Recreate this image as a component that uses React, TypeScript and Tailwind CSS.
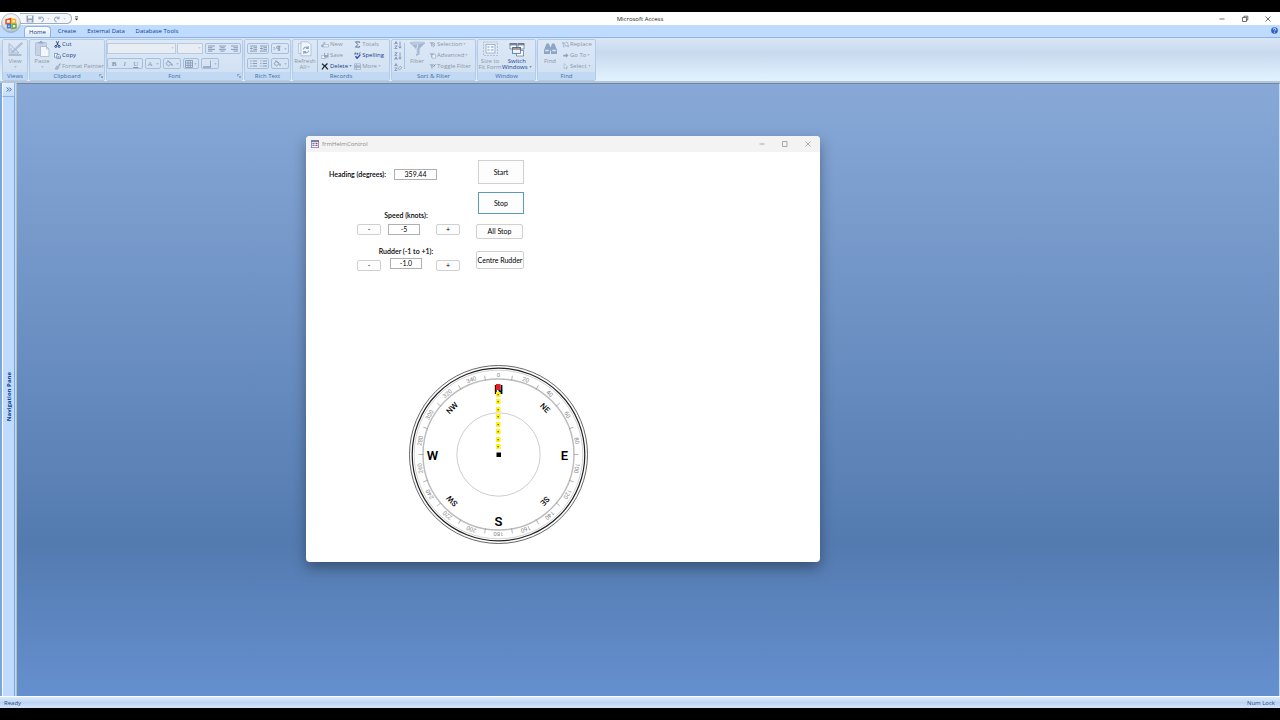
import type { ReactNode } from "react";

const ENABLED = "text-[#15428b]";
const DISABLED = "text-[#8c95a3]";

const FONT_GLYPHS = [
  { key: "bold", label: "B", className: "font-bold" },
  { key: "italic", label: "I", className: "italic" },
  { key: "underline", label: "U", className: "underline" },
];

const DEGREES = Array.from({ length: 36 }, (_, index) => index * 10);

const MAIN_POINTS = [
  { label: "N", x: 90, y: 24 },
  { label: "E", x: 156, y: 90 },
  { label: "S", x: 90, y: 156 },
  { label: "W", x: 24, y: 90 },
];

const MINOR_POINTS = [
  { label: "NE", angle: 45 },
  { label: "SE", angle: 135 },
  { label: "SW", angle: 225 },
  { label: "NW", angle: 315 },
];

const NEEDLE_STEPS = [30, 37, 45, 52, 60, 67, 75, 82];

export default function App() {
  return (
    <div className="flex h-screen flex-col overflow-hidden bg-black py-3 font-['Open_Sans','Noto_Sans',sans-serif] text-[6px] leading-[8px]">
      <TitleBar />
      <Ribbon />
      <div className="flex min-h-0 flex-1">
        <NavigationPane />
        <main className="relative min-w-0 flex-1 border-t border-r border-t-[#6f86a6] border-r-[#c4dcf8] bg-linear-to-b from-[#88a9d8] via-[#547bb0] via-75% to-[#6590cf]">
          <HelmWindow />
        </main>
      </div>
      <footer className="flex h-3 shrink-0 items-center justify-between border-t border-white bg-linear-to-b from-[#dcebfd] via-[#bcd4f3] to-[#d3e5fb] px-1 text-[#2c4a7c]">
        <span>Ready</span>
        <span className="pr-px">Num Lock</span>
      </footer>
    </div>
  );
}

function TitleBar() {
  return (
    <header className="relative z-10 h-[25px] shrink-0 bg-[#bfdbff]">
      <div className="grid h-[13px] grid-cols-3 items-center bg-white">
        <div className="ml-5 flex h-[11px] w-[52px] items-center gap-1 rounded-r-full border border-l-0 border-[#a3adba] bg-[#f4f8fd] pl-[6px] text-[#a4afc0]">
          <button type="button" aria-label="Save">
            <SaveIcon />
          </button>
          <button type="button" aria-label="Undo" className="flex items-center gap-[3px]">
            <UndoIcon />
            <DropArrow />
          </button>
          <button type="button" aria-label="Redo" className="flex items-center gap-[3px]">
            <span className="-scale-x-100">
              <UndoIcon />
            </span>
            <DropArrow />
          </button>
          <button type="button" aria-label="Customize toolbar" className="ml-1 text-[#333]">
            <svg className="size-[5px]" viewBox="0 0 5 5" fill="currentColor">
              <path d="M1 0.500h3v0.800H1zM0.800 2.500h3.400L2.500 4.500z" />
            </svg>
          </button>
        </div>
        <h1 className="text-center text-[#222]">Microsoft Access</h1>
        <div className="flex justify-end gap-[15px] pr-2 text-[#333]">
          <WindowButton label="Minimize" path="M1.500 4h5" />
          <WindowButton label="Restore" path="M1.500 2.500h4v4h-4zM3 2.500V1.200h3.800v3.800h-1.300" />
          <WindowButton label="Close" path="M1.500 1.500l5 5M6.500 1.500l-5 5" />
        </div>
      </div>
      <nav className="flex h-3 items-end gap-[5px] pl-[24px] text-[#15428b]">
        <button
          type="button"
          className="h-[11px] w-[27px] rounded-t-sm border border-b-0 border-[#8db2e3] bg-linear-to-b from-white to-[#dde9f7]"
        >
          Home
        </button>
        <button type="button" className="h-3 w-[22px]">Create</button>
        <button type="button" className="h-3 w-[46px]">External Data</button>
        <button type="button" className="h-3 w-[46px]">Database Tools</button>
        <button type="button" aria-label="Help" className="mr-[2px] mb-[3px] ml-auto">
          <svg className="size-[7px]" viewBox="0 0 7 7">
            <circle cx="3.500" cy="3.500" r="3.300" fill="#2d62c0" />
            <path d="M2.300 2.600q0-1.200 1.200-1.200t1.200 1-1.200 1.400M3.500 4.800v.8" fill="none" stroke="#fff" strokeWidth="0.900" />
          </svg>
        </button>
      </nav>
      <button type="button" aria-label="Office Button" className="absolute top-px left-[1px]">
        <OfficeLogo />
      </button>
    </header>
  );
}

function Ribbon() {
  return (
    <div className="flex h-[46px] shrink-0 flex-col border-t border-b-2 border-t-[#8db2e3] border-b-[#b4c5d8] bg-linear-to-b from-[#dae6f4] via-[#c8d9ee] via-35% to-[#e2f3fe]">
      <div className="flex min-h-0 flex-1 gap-px pt-px pr-1 pl-[2px]">
        <Group title="Views" width="w-[26px]">
          <BigButton label="View" arrow icon={<ViewIcon />} />
        </Group>
        <Group title="Clipboard" width="w-[76px]" launcher>
          <BigButton label="Paste" arrow icon={<PasteIcon />} />
          <ButtonColumn>
            <SmallButton label="Cut" enabled icon={<CutIcon />} />
            <SmallButton label="Copy" enabled icon={<CopyIcon />} />
            <SmallButton label="Format Painter" icon={<BrushIcon />} />
          </ButtonColumn>
        </Group>
        <Group title="Font" width="w-[137px]" launcher>
          <FontControls />
        </Group>
        <Group title="Rich Text" width="w-[47px]">
          <div className="flex flex-col gap-1 pt-[3px] pl-[2px]">
            <div className="flex gap-[2px]">
              <IconBox width="w-[22px]">
                <LinesIcon kind="outdent" />
                <LinesIcon kind="indent" />
              </IconBox>
              <IconBox width="w-[18px]">
                <ParagraphIcon />
                <DropArrow />
              </IconBox>
            </div>
            <div className="flex gap-[2px]">
              <IconBox width="w-[22px]">
                <LinesIcon kind="numbers" />
                <LinesIcon kind="bullets" />
              </IconBox>
              <IconBox width="w-[18px]">
                <HighlightIcon />
                <DropArrow />
              </IconBox>
            </div>
          </div>
        </Group>
        <Group title="Records" width="w-[98px]">
          <BigButton label="Refresh" secondLine="All" arrow icon={<RefreshIcon />} />
          <ButtonColumn divider>
            <SmallButton label="New" icon={<NewIcon />} />
            <SmallButton label="Save" icon={<SaveRecordIcon />} />
            <SmallButton label="Delete" enabled arrow icon={<DeleteIcon />} />
          </ButtonColumn>
          <div className="ml-[2px]">
            <ButtonColumn>
              <SmallButton label="Totals" icon={<SigmaIcon />} />
              <SmallButton label="Spelling" enabled icon={<SpellingIcon />} />
              <SmallButton label="More" arrow icon={<MoreIcon />} />
            </ButtonColumn>
          </div>
        </Group>
        <Group title="Sort & Filter" width="w-[85px]">
          <div className="flex flex-col gap-[3px] pt-px pl-[2px]">
            <SortIcon first="A" second="Z" />
            <SortIcon first="Z" second="A" />
            <ClearSortIcon />
          </div>
          <div className="my-[3px] ml-[2px] border-l border-[#a9c3e2]" />
          <BigButton label="Filter" icon={<FunnelIcon />} />
          <ButtonColumn>
            <SmallButton label="Selection" arrow icon={<FilterMarkIcon kind="bolt" />} />
            <SmallButton label="Advanced" arrow icon={<FilterMarkIcon kind="sheet" />} />
            <SmallButton label="Toggle Filter" icon={<FilterMarkIcon kind="plain" />} />
          </ButtonColumn>
        </Group>
        <Group title="Window" width="w-[59px]">
          <BigButton label="Size to" secondLine="Fit Form" icon={<SizeFormIcon />} />
          <BigButton label="Switch" secondLine="Windows" enabled arrow icon={<SwitchIcon />} />
        </Group>
        <Group title="Find" width="w-[59px]">
          <BigButton label="Find" icon={<BinocularsIcon />} />
          <ButtonColumn>
            <SmallButton label="Replace" icon={<ReplaceIcon />} />
            <SmallButton label="Go To" arrow icon={<GoToIcon />} />
            <SmallButton label="Select" arrow icon={<PointerIcon />} />
          </ButtonColumn>
        </Group>
      </div>
    </div>
  );
}

type GroupProps = {
  title: string;
  width: string;
  launcher?: boolean;
  children: ReactNode;
};

function Group({ title, width, launcher, children }: GroupProps) {
  return (
    <section
      className={`flex shrink-0 flex-col rounded-[2px] border border-[#b3cbe8] bg-linear-to-b from-[#dce8f6] to-[#d0e0f2] ${width}`}
    >
      <div className="flex min-h-0 flex-1 whitespace-nowrap">{children}</div>
      <div className="relative h-2 shrink-0 bg-[#c1d9f2] text-center whitespace-nowrap text-[#3e6aaa]">
        {title}
        {launcher && (
          <button type="button" aria-label={`${title} options`} className="absolute right-px bottom-[2px]">
            <svg className="size-1" viewBox="0 0 4 4" fill="none" stroke="#6f8fb8" strokeWidth="0.700">
              <path d="M0.500 2.500v-2h2M1.800 1.800l1.700 1.700M3.600 2v1.600H2" />
            </svg>
          </button>
        )}
      </div>
    </section>
  );
}

function ButtonColumn({ divider, children }: { divider?: boolean; children: ReactNode }) {
  return (
    <div
      className={`flex shrink-0 flex-col items-start gap-[3px] ${
        divider ? "border-l border-[#a9c3e2] pl-[3px]" : ""
      }`}
    >
      {children}
    </div>
  );
}

type RibbonButtonProps = {
  label: string;
  secondLine?: string;
  enabled?: boolean;
  arrow?: boolean;
  icon: ReactNode;
};

function BigButton({ label, secondLine, enabled, arrow, icon }: RibbonButtonProps) {
  return (
    <button
      type="button"
      disabled={!enabled}
      className={`flex min-w-6 shrink-0 flex-col items-center pt-px leading-[6px] ${enabled ? ENABLED : DISABLED}`}
    >
      {icon}
      <span className="mt-px">{label}</span>
      <span className="flex min-h-[6px] items-center gap-px">
        {secondLine}
        {arrow && <DropArrow />}
      </span>
    </button>
  );
}

function SmallButton({ label, enabled, arrow, icon }: RibbonButtonProps) {
  return (
    <button
      type="button"
      disabled={!enabled}
      className={`flex h-2 items-center gap-px ${enabled ? ENABLED : DISABLED}`}
    >
      {icon}
      <span>{label}</span>
      {arrow && <DropArrow />}
    </button>
  );
}

function IconBox({ width, children }: { width: string; children: ReactNode }) {
  return (
    <div
      className={`flex h-[11px] shrink-0 items-center justify-around rounded-[2px] border border-[#a5bfe0] text-[#8093b0] ${width}`}
    >
      {children}
    </div>
  );
}

function FontControls() {
  return (
    <div className="flex flex-col gap-1 pt-[3px]">
      <div className="flex gap-px">
        <FontSelect label="Font" width="w-[69px]" />
        <FontSelect label="Font size" width="w-[26px]" />
        <div className="ml-px">
          <IconBox width="w-[36px]">
            <LinesIcon kind="left" />
            <LinesIcon kind="center" />
            <LinesIcon kind="right" />
          </IconBox>
        </div>
      </div>
      <div className="flex gap-[2px]">
        <IconBox width="w-[36px]">
          {FONT_GLYPHS.map((glyph) => (
            <button key={glyph.key} type="button" disabled className={`font-['Liberation_Serif',serif] text-[7px] ${glyph.className}`}>
              {glyph.label}
            </button>
          ))}
        </IconBox>
        <IconBox width="w-4">
          <span className="font-['Liberation_Serif',serif] text-[7px]">A</span>
          <DropArrow />
        </IconBox>
        <IconBox width="w-[18px]">
          <HighlightIcon />
          <DropArrow />
        </IconBox>
        <IconBox width="w-4">
          <svg className="size-2" viewBox="0 0 8 8" fill="none" stroke="currentColor" strokeWidth="0.800">
            <path d="M0.500 0.500h7v7h-7zM0.500 3h7M0.500 5.300h7M3 .5v7M5.300.5v7" />
          </svg>
          <DropArrow />
        </IconBox>
        <IconBox width="w-[18px]">
          <svg className="size-2" viewBox="0 0 8 8" fill="none" stroke="currentColor" strokeWidth="0.700">
            <path d="M7.500 0.500v6.500" />
            <path d="M0 7h8" strokeWidth="1.300" />
          </svg>
          <DropArrow />
        </IconBox>
      </div>
    </div>
  );
}

function FontSelect({ label, width }: { label: string; width: string }) {
  return (
    <div className={`relative h-[11px] ${width}`}>
      <select
        aria-label={label}
        disabled
        className="block size-full appearance-none border border-[#b9cbe0] bg-[#e8edf3]"
      />
      <span className="absolute top-1 right-[2px] text-[#a4afc0]">
        <DropArrow />
      </span>
    </div>
  );
}

function NavigationPane() {
  return (
    <aside className="flex w-[17px] shrink-0 flex-col border-r border-l-2 border-r-[#b9bfae] border-l-[#7ea6d8] bg-[#bfdbff] pr-px">
      <button
        type="button"
        aria-label="Open navigation pane"
        className="flex h-[14px] shrink-0 items-center justify-center border-x border-b border-[#8db2e3] border-l-white bg-linear-to-b from-[#e3effe] to-[#c4dcfa] text-[#15428b]"
      >
        <svg className="h-[5px] w-[6px]" viewBox="0 0 6 5" fill="none" stroke="currentColor" strokeWidth="0.800">
          <path d="M0.700 0.500l2 2-2 2M3.200 0.500l2 2-2 2" />
        </svg>
      </button>
      <div className="flex flex-1 items-center justify-center border-x border-r-[#7ea6d8] border-l-white">
        <span className="rotate-180 font-bold text-[#15428b] [writing-mode:vertical-rl]">Navigation Pane</span>
      </div>
    </aside>
  );
}

function HelmWindow() {
  return (
    <section className="absolute top-[52px] left-[289px] flex h-[426px] w-[514px] flex-col overflow-hidden rounded-[4px] bg-white shadow-[0_6px_14px_rgba(0,0,0,0.35)]">
      <header className="flex h-4 shrink-0 items-center bg-[#f3f3f3] pr-2 pl-[5px] text-[#8a8a8a]">
        <svg className="size-2" viewBox="0 0 8 8">
          <path d="M0 0h8v8H0z" fill="#7d7aa8" />
          <path d="M0.800 2h6.400v5.200H.8z" fill="#f5f5fb" />
          <path d="M1.500 3.400h2M1.500 5.400h2" stroke="#5477c4" strokeWidth="1.200" />
          <path d="M4.500 3.400h2M4.500 5.400h2" stroke="#b0485d" strokeWidth="1.200" />
        </svg>
        <h2 className="ml-[3px]">frmHelmControl</h2>
        <div className="ml-auto flex gap-[15px]">
          <WindowButton label="Minimize form" path="M1.500 4h5" />
          <WindowButton label="Maximize form" path="M1.500 1.500h4.500v5h-4.500z" />
          <WindowButton label="Close form" path="M1.500 1.500l5 5M6.500 1.500l-5 5" />
        </div>
      </header>
      <form className="flex flex-1 flex-col pt-2 pb-[18px] pl-[23px] font-['Lato',sans-serif] text-[7px] text-black">
        <div className="flex gap-4">
          <div className="flex w-[131px] flex-col">
            <div className="mt-[9px] flex items-center justify-between pr-[23px]">
              <label htmlFor="heading" className="pb-px font-semibold">Heading (degrees):</label>
              <ValueField id="heading" value="359.44" width="w-[43px]" />
            </div>
            <Stepper id="speed" label="Speed (knots):" value="-5" spacing="mt-[31px]" rowClass="mt-[5px]" fieldClass="ml-[7px]" />
            <Stepper id="rudder" label="Rudder (-1 to +1):" value="-1.0" spacing="mt-3" rowClass="mt-[3px]" fieldClass="mb-1 ml-[9px]" />
          </div>
          <div className="flex flex-col">
            <FormButton className="ml-[2px] h-6 w-[46px] border-[#d0d0d0]">Start</FormButton>
            <FormButton className="mt-2 ml-[2px] h-[22px] w-[46px] border-[#5c9bb5]">Stop</FormButton>
            <FormButton className="mt-[10px] h-[15px] w-[47px] rounded-[2px] border-[#d0d0d0]">All Stop</FormButton>
            <FormButton className="mt-3 h-[18px] w-12 rounded-[2px] border-[#d0d0d0]">Centre Rudder</FormButton>
          </div>
        </div>
        <div className="mt-auto ml-[79px]">
          <Compass />
        </div>
      </form>
    </section>
  );
}

function ValueField({ id, value, width }: { id: string; value: string; width: string }) {
  return (
    <input
      id={id}
      defaultValue={value}
      className={`block h-[11px] border border-[#b0b0b0] bg-white p-0 pb-px text-center leading-[8px] ${width}`}
    />
  );
}

type StepperProps = {
  id: string;
  label: string;
  value: string;
  spacing: string;
  rowClass: string;
  fieldClass: string;
};

function Stepper({ id, label, value, spacing, rowClass, fieldClass }: StepperProps) {
  return (
    <div className={`ml-7 flex flex-col ${spacing}`}>
      <label htmlFor={id} className="self-center pr-[5px] font-semibold">{label}</label>
      <div className={`flex items-center ${rowClass}`}>
        <FormButton className="h-[11px] w-6 rounded-[2px] border-[#d0d0d0]">-</FormButton>
        <div className={fieldClass}>
          <ValueField id={id} value={value} width="w-8" />
        </div>
        <div className="ml-auto">
          <FormButton className="h-[11px] w-6 rounded-[2px] border-[#d0d0d0]">+</FormButton>
        </div>
      </div>
    </div>
  );
}

function FormButton({ className, children }: { className: string; children: ReactNode }) {
  return (
    <button
      type="button"
      className={`flex items-center justify-center border bg-[#fdfdfd] pb-px whitespace-nowrap ${className}`}
    >
      {children}
    </button>
  );
}

function Compass() {
  return (
    <svg className="block size-[180px]" viewBox="-0.500 -0.500 180 180" role="img" aria-label="Compass heading">
      <g fill="none">
        <circle cx="90" cy="90" r="89" stroke="#555" strokeWidth="0.900" />
        <circle cx="90" cy="90" r="86.300" stroke="#222" strokeWidth="1.200" />
        <circle cx="90" cy="90" r="84.300" stroke="#b5b5b5" strokeWidth="0.600" />
        <circle cx="90" cy="90" r="75.500" stroke="#bbb" strokeWidth="1.400" />
        <circle cx="90" cy="90" r="41.700" stroke="#b8b8b8" strokeWidth="0.700" />
      </g>
      {DEGREES.map((degree) =>
        degree % 20 === 0 ? (
          <text
            key={degree}
            x="90"
            y="12.500"
            className="font-['Roboto',sans-serif] text-[6px]"
            fill="#888"
            textAnchor="middle"
            transform={`rotate(${degree} 90 90)`}
          >
            {degree}
          </text>
        ) : (
          <path
            key={degree}
            d="M90 10V15"
            stroke="#999"
            strokeWidth="0.700"
            transform={`rotate(${degree} 90 90)`}
          />
        ),
      )}
      {MAIN_POINTS.map((point) => (
        <text
          key={point.label}
          x={point.x}
          y={point.y + 5}
          className="font-['Roboto',sans-serif] text-[13px] font-semibold"
          textAnchor="middle"
        >
          {point.label}
        </text>
      ))}
      {MINOR_POINTS.map((point) => (
        <text
          key={point.label}
          x="90"
          y="27"
          className="font-['Roboto',sans-serif] text-[8px] font-medium"
          textAnchor="middle"
          transform={`rotate(${point.angle} 90 90)`}
        >
          {point.label}
        </text>
      ))}
      <rect x="87.500" y="19.500" width="4.500" height="6" fill="#e0202c" />
      {NEEDLE_STEPS.map((y) => (
        <g key={y}>
          <rect x="87.500" y={y - 2.5} width="4.500" height="5" fill="#fff21c" />
          <rect x="89" y={y - 0.5} width="1.300" height="1.300" fill="#5b5600" />
        </g>
      ))}
      <rect x="88" y="88" width="4.500" height="4.500" />
    </svg>
  );
}

function WindowButton({ label, path }: { label: string; path: string }) {
  return (
    <button type="button" aria-label={label}>
      <svg className="size-2" viewBox="0 0 8 8" fill="none" stroke="currentColor" strokeWidth="0.700">
        <path d={path} />
      </svg>
    </button>
  );
}

function DropArrow() {
  return (
    <svg aria-hidden="true" className="h-[2px] w-[3px] shrink-0 opacity-70" viewBox="0 0 3 2" fill="currentColor">
      <path d="M0.300 0.200h2.400L1.500 1.700z" />
    </svg>
  );
}

function OfficeLogo() {
  return (
    <svg className="size-5" viewBox="0 0 20 20">
      <defs>
        <radialGradient id="orb" cx="50%" cy="30%" r="75%">
          <stop offset="0" stopColor="#fff" />
          <stop offset="0.600" stopColor="#e3e6ec" />
          <stop offset="1" stopColor="#98a8c0" />
        </radialGradient>
      </defs>
      <circle cx="10" cy="10" r="9.500" fill="url(#orb)" stroke="#8b9bb4" strokeWidth="0.600" />
      <g fill="none" strokeWidth="1.500">
        <path d="M5 7l4.500-1.500v4.700l-4.500 .4z" stroke="#e2571e" />
        <path d="M10.800 6l3.700.6v3.400h-3.700z" stroke="#f5b324" />
        <path d="M6.500 11.800h2.800v2.900h-2.800z" stroke="#3c7bd4" />
        <path d="M11 11.300h4v3.500L11 15.500z" stroke="#6aa83c" />
      </g>
    </svg>
  );
}

function SaveIcon() {
  return (
    <svg className="size-2" viewBox="0 0 8 8">
      <path d="M0.500 0.500h7v7h-6l-1-1z" fill="#8f9fbb" />
      <path d="M2 .8h4v2.700H2z" fill="#f2f6fb" />
      <path d="M2.300 5h3.500v2.500H2.300z" fill="#dbe4f0" />
    </svg>
  );
}

function UndoIcon() {
  return (
    <svg className="h-2 w-[6px]" viewBox="0 0 6 8" fill="none" stroke="#9aaac3" strokeWidth="1.100">
      <path d="M1 1.500v2.300h2.300M1.200 3.600Q3.500.8 5 3t-1.600 4" />
    </svg>
  );
}

function ViewIcon() {
  return (
    <svg className="h-4 w-[17px]" viewBox="0 0 17 16" fill="none" stroke="#a0b3ce" strokeWidth="0.900">
      <path d="M2 2.500l10 9.500H2zM4 7v3h3" fill="#d7e3f2" />
      <path d="M14.500 1.500L6 9.500l-1 2 2-1 8.500-8z" fill="#bccbdf" />
      <path d="M1.500 14h13" strokeWidth="1.600" />
    </svg>
  );
}

function PasteIcon() {
  return (
    <svg className="h-4 w-[15px]" viewBox="0 0 15 16">
      <rect x="0.500" y="1.500" width="11" height="13" rx="1" fill="#c3d2e6" stroke="#a2b5d0" strokeWidth="0.700" />
      <path d="M3.500 2.500V1h1.300a1.200 1.200 0 0 1 2.400 0h1.300v1.500z" fill="#94a9c7" />
      <path d="M5.500 5.500h6l2.500 2.500v7.500H5.500z" fill="#f3f7fc" stroke="#9fb2ce" strokeWidth="0.700" />
      <path d="M11.500 5.500V8H14" fill="none" stroke="#9fb2ce" strokeWidth="0.700" />
    </svg>
  );
}

function CutIcon() {
  return (
    <svg className="size-[7px]" viewBox="0 0 7 7" fill="none" stroke="#24467f" strokeWidth="1">
      <path d="M2.300.3l2 4.200M4.700.3l-2 4.200" />
      <circle cx="1.800" cy="5.400" r="1" />
      <circle cx="5.200" cy="5.400" r="1" />
    </svg>
  );
}

function CopyIcon() {
  return (
    <svg className="size-[7px]" viewBox="0 0 7 7" fill="#fff" stroke="#5578b0" strokeWidth="0.700">
      <path d="M0.400 1.400h3.200v3.800H.4z" />
      <path d="M2.800 2.600h2.400l1.300 1.300v2.700H2.800z" />
      <path d="M3.700 4.300h1.800M3.700 5.400h1.800" />
    </svg>
  );
}

function BrushIcon() {
  return (
    <svg className="size-[7px]" viewBox="0 0 7 7" fill="none" stroke="#8ea0bb">
      <path d="M6.300.5L4.500 3.400" strokeWidth="1.200" />
      <path d="M2.800 2.800l2.400 1.600-1.800 2.100-2.400-.5z" fill="#aab8cb" strokeWidth="0.500" />
    </svg>
  );
}

function LinesIcon({ kind }: { kind: "left" | "center" | "right" | "indent" | "outdent" | "numbers" | "bullets" }) {
  const paths = {
    left: "M0 1h7M0 2.700h4.500M0 4.400h7M0 6.100h4.500",
    center: "M0 1h7M1.300 2.700h4.400M0 4.400h7M1.300 6.100h4.400",
    right: "M0 1h7M2.500 2.700H7M0 4.400h7M2.500 6.100H7",
    indent: "M0 1h7M3.500 2.700H7M3.500 4.400H7M0 6.100h7M0 3.500h2.500M1.500 2.300l1.200 1.200-1.200 1.200",
    outdent: "M0 1h7M3.500 2.700H7M3.500 4.400H7M0 6.100h7M0.300 3.500h2.500M1.500 2.300L.3 3.500l1.200 1.200",
    numbers: "M2.700 1H7M2.700 3.500H7M2.700 6H7M1 0.300v1.500M.5 3.500h1M1 5.300v1.500",
    bullets: "M2.700 1H7M2.700 3.500H7M2.700 6H7M0.300 1h1.200M.3 3.500h1.200M.3 6h1.200",
  };

  return (
    <svg aria-hidden="true" className="size-[7px]" viewBox="0 0 7 7" fill="none" stroke="currentColor" strokeWidth="0.900">
      <path d={paths[kind]} />
    </svg>
  );
}

function ParagraphIcon() {
  return (
    <svg className="h-[7px] w-2" viewBox="0 0 8 7" fill="none" stroke="currentColor" strokeWidth="0.800">
      <path d="M0.500 2l1.500 1.500L.5 5M7.500 1.200H4.700a1.100 1.100 0 0 0 0 2.300h.5M5.300 1.200V6M6.600 1.200V6" />
    </svg>
  );
}

function HighlightIcon() {
  return (
    <svg className="h-[7px] w-2" viewBox="0 0 8 7" fill="none" stroke="currentColor" strokeWidth="0.800">
      <path d="M3.300 1L1 3.700 3.600 6l2.700-2.600zM2.500.5l2.800 2.600" fill="#d5dfec" />
      <path d="M7 3.800v2" strokeWidth="1.200" />
    </svg>
  );
}

function RefreshIcon() {
  return (
    <svg className="h-4 w-[14px]" viewBox="0 0 14 16">
      <path d="M0.500 2.500h7.500v10H.5z" fill="#e9f0f8" stroke="#a6b8d1" strokeWidth="0.700" />
      <path d="M3 0.800h7l3 3v11H3z" fill="#f1f6fc" stroke="#9fb3cf" strokeWidth="0.700" />
      <path d="M5.300 8.500a2.700 2.700 0 0 1 4.800-1.300M10.300 5.300v2.200H8M10.700 9.500a2.700 2.700 0 0 1-4.800 1.300M5.700 12.800v-2.200H8" fill="none" stroke="#8ba4c8" strokeWidth="1.100" />
    </svg>
  );
}

function NewIcon() {
  return (
    <svg className="h-[7px] w-2" viewBox="0 0 8 7">
      <path d="M2.500 3.500h5v2.500h-5z" fill="#e9eff7" stroke="#93a7c4" strokeWidth="0.600" />
      <path d="M0 4.800l1.800-1.300v2.600zM3.300.8v2.400M2.100 2h2.400" fill="#93a7c4" stroke="#93a7c4" strokeWidth="0.700" />
    </svg>
  );
}

function SaveRecordIcon() {
  return (
    <svg className="h-[7px] w-2" viewBox="0 0 8 7">
      <path d="M0.300 3.500h4.500V6.500H.3z" fill="#e9eff7" stroke="#93a7c4" strokeWidth="0.600" />
      <path d="M3 1h4.500v4.500H3z" fill="#93a7c4" />
      <path d="M4 1.200h2.500v1.600H4z" fill="#eef3f9" />
    </svg>
  );
}

function DeleteIcon() {
  return (
    <svg className="h-[7px] w-2" viewBox="0 0 8 7" fill="none" stroke="#1e2636" strokeWidth="1.300">
      <path d="M1 .7q3 2 5.800 5.600M6.500.5Q3.500 2.700 1 6.500" />
    </svg>
  );
}

function SigmaIcon() {
  return (
    <svg className="size-[7px]" viewBox="0 0 7 7" fill="none" stroke="#5e7394" strokeWidth="1">
      <path d="M5.600 1.900V.9H1.500L3.800 3.500 1.500 6.100h4.100v-1" />
    </svg>
  );
}

function SpellingIcon() {
  return (
    <svg className="size-[7px]" viewBox="0 0 7 7" fill="none">
      <path d="M0.500 2.500L1.300.6l.8 1.900M.8 1.900h1M3 .7v1.700h.9a.5.5 0 0 0 0-.9H3M6.500.8a.8.800 0 1 0 0 1.500" stroke="#384a6d" strokeWidth="0.600" />
      <path d="M1.500 4.300l1.600 2L6.200 2.900" stroke="#2a50b5" strokeWidth="1.400" />
    </svg>
  );
}

function MoreIcon() {
  return (
    <svg className="size-[7px]" viewBox="0 0 7 7">
      <path d="M0.400 0.900h6.200v5.400H.4zM.4 2.700h6.200M.4 4.500h6.200M2.500 1v5.300" fill="#eaf0f7" stroke="#8fa4c2" strokeWidth="0.700" />
      <path d="M0.400 2.700h6.200v1.800H.4z" fill="#a3b5cf" />
    </svg>
  );
}

function SortIcon({ first, second }: { first: string; second: string }) {
  return (
    <svg role="img" aria-label={`Sort ${first} to ${second}`} className="size-2" viewBox="0 0 8 8" fill="none" stroke="#7189ad" strokeWidth="0.800">
      <path d={first === "A" ? "M0.500 3.300L2 .5l1.500 2.800M1 2.400h2" : "M0.600.7h2.700L.6 3.300h2.700"} />
      <path d={second === "A" ? "M0.500 7.700L2 4.900l1.500 2.800M1 6.800h2" : "M0.600 5h2.700L.6 7.500h2.700"} />
      <path d="M6 .5v6.500M4.700 5.500L6 7.200l1.300-1.700" />
    </svg>
  );
}

function ClearSortIcon() {
  return (
    <svg className="size-2" viewBox="0 0 8 8" fill="none" stroke="#7189ad" strokeWidth="0.700">
      <path d="M0.500 3.300L2 .5l1.500 2.800M1 2.400h2M.6 5h2.700L.6 7.500h2.700" />
      <path d="M4.200 5.700l2-2.500 1.500 1.200-2 2.500z" fill="#e8eef6" />
    </svg>
  );
}

function FunnelIcon() {
  return (
    <svg className="h-4 w-[17px]" viewBox="0 0 17 16">
      <path d="M1 2h15l-5.500 6v5.500L7 15V8z" fill="#a5b8d2" />
      <path d="M3 3h6L7.700 8v5" fill="none" stroke="#dce6f2" strokeWidth="1" />
      <ellipse cx="8.500" cy="2" rx="7.500" ry="1" fill="#c6d4e7" stroke="#93a8c7" strokeWidth="0.500" />
    </svg>
  );
}

function FilterMarkIcon({ kind }: { kind: "bolt" | "sheet" | "plain" }) {
  return (
    <svg className="size-[7px]" viewBox="0 0 8 7">
      <path d="M0.500.8h5.500L4 3.300v2.900l-1.500-.8V3.300z" fill="#9db0cb" />
      {kind === "bolt" && <path d="M6.800 1.500L5 4h1.500L5 6.700" fill="none" stroke="#8497b5" strokeWidth="0.800" />}
      {kind === "sheet" && <path d="M3.500 2.500h4v4h-4z" fill="#eef3f9" stroke="#8fa4c2" strokeWidth="0.700" />}
      {kind === "plain" && <path d="M4.800 4.200L7.300 1" fill="none" stroke="#7187a8" strokeWidth="1" />}
    </svg>
  );
}

function SizeFormIcon() {
  return (
    <svg className="h-4 w-[15px]" viewBox="0 0 15 16">
      <rect x="0.500" y="1" width="14" height="13.500" fill="#dde7f3" stroke="#a3b6d1" strokeWidth="0.800" strokeDasharray="2 1" />
      <rect x="3" y="3.500" width="9" height="8.500" fill="#f4f8fc" stroke="#92a8c8" strokeWidth="0.800" />
      <path d="M4.500 6h2M8 6h2.500M4.500 9h2M8 9h2.500" stroke="#7b94ba" strokeWidth="1.200" />
    </svg>
  );
}

function SwitchIcon() {
  return (
    <svg className="h-4 w-4" viewBox="0 0 16 16" stroke="#5c6c86" strokeWidth="0.700">
      <path d="M1 2.500h6.500V8H1zM9 2.500h6V8H9z" fill="#fff" />
      <path d="M1 2.500h6.500v1.500H1zM9 2.500h6v1.500H9z" fill="#8c98ab" />
      <path d="M7.500 9.500h7V15h-7z" fill="#fff" />
      <path d="M3.500 6.500h8v6h-8z" fill="#eaf3ff" stroke="#2e5cab" />
      <path d="M3.500 6.500h8v1.700h-8z" fill="#e9a73a" stroke="#2e5cab" />
    </svg>
  );
}

function BinocularsIcon() {
  return (
    <svg className="h-4 w-[15px]" viewBox="0 0 15 16" fill="#8fa5c5">
      <path d="M3.500 2.500h2.500l1 3v7.500H1V9zM9 2.500h2.500L14 9v4H8V5.500z" />
      <path d="M6.500 6h2v3.500h-2z" />
      <path d="M2.200 9.500h3.500M9.300 9.500h3.500" stroke="#dbe5f1" strokeWidth="1.300" />
    </svg>
  );
}

function ReplaceIcon() {
  return (
    <svg className="size-[7px]" viewBox="0 0 8 7" fill="none" stroke="#879cbc" strokeWidth="0.700">
      <path d="M1 .4v2.800h1.300a.8.800 0 0 0 0-1.600H1M4.200 3.500a1 1 0 1 0 1.300 1.800M6.700 4a1 1 0 1 0 0 2M7.500 3.500v3M3.800 1h2.700v1.500M1.500 4.200v2h1.500" />
    </svg>
  );
}

function GoToIcon() {
  return (
    <svg className="size-[7px]" viewBox="0 0 8 7" fill="#8ba1c1">
      <path d="M1.500 2.500h3V1L7.500 3.500 4.500 6V4.500h-3z" />
    </svg>
  );
}

function PointerIcon() {
  return (
    <svg className="size-[7px]" viewBox="0 0 8 7">
      <path d="M2.500.4v5.300l1.300-1.200.9 2 .9-.4-.9-1.900h1.700z" fill="#f2f6fb" stroke="#869bbb" strokeWidth="0.600" />
    </svg>
  );
}
